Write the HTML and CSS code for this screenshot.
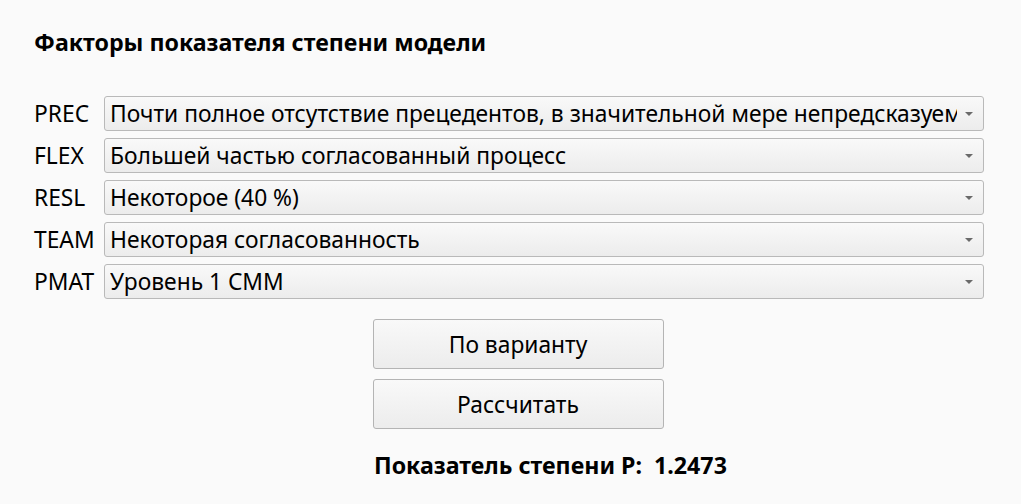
FILE: index.html
```html
<!DOCTYPE html>
<html lang="ru">
<head>
<meta charset="utf-8">
<link rel="stylesheet" href="styles.css">
</head>
<body>
<div class="page">
  <h1 class="title">Факторы показателя степени модели</h1>
  <div class="factors">
    <span class="label">PREC</span>
    <div class="combo"><span class="combo-text">Почти полное отсутствие прецедентов, в значительной мере непредсказуемый процесс</span><span class="arrow"></span></div>
    <span class="label">FLEX</span>
    <div class="combo"><span class="combo-text">Большей частью согласованный процесс</span><span class="arrow"></span></div>
    <span class="label">RESL</span>
    <div class="combo"><span class="combo-text">Некоторое (40 %)</span><span class="arrow"></span></div>
    <span class="label">TEAM</span>
    <div class="combo"><span class="combo-text">Некоторая согласованность</span><span class="arrow"></span></div>
    <span class="label">PMAT</span>
    <div class="combo"><span class="combo-text">Уровень 1 CMM</span><span class="arrow"></span></div>
  </div>
  <div class="actions">
    <button class="btn">По варианту</button>
    <button class="btn">Рассчитать</button>
    <div class="result">Показатель степени P:&nbsp; 1.2473</div>
  </div>
</div>
</body>
</html>
```
FILE: styles.css
```css
html, body {
  margin: 0;
  padding: 0;
  background: #fafafa;
}
body {
  font-family: "Noto Sans", "DejaVu Sans", sans-serif;
  color: #000;
  width: 1021px;
  height: 504px;
  overflow: hidden;
}
.page {
  padding: 26px 0 0 34px;
}
.title {
  margin: 0;
  font-size: 23.2px;
  font-weight: 700;
  line-height: 32px;
}
.factors {
  margin-top: 38px;
  display: grid;
  grid-template-columns: 70px 880px;
  grid-auto-rows: 35px;
  row-gap: 7px;
  align-items: center;
}
.label {
  font-size: 22.8px;
  line-height: 35px;
}
.combo {
  box-sizing: border-box;
  height: 35px;
  border: 1px solid #b9b9b9;
  border-radius: 3px;
  background: linear-gradient(#f9f9f9, #ececec);
  display: flex;
  align-items: center;
  padding: 0 10px 0 5px;
  gap: 8px;
}
.combo-text {
  flex: 1;
  font-size: 22.8px;
  line-height: 33px;
  white-space: nowrap;
  overflow: hidden;
}
.arrow {
  width: 0;
  height: 0;
  border-left: 4px solid transparent;
  border-right: 4px solid transparent;
  border-top: 4px solid #6a6a6a;
}
.actions {
  width: 968px;
  display: flex;
  flex-direction: column;
  align-items: center;
  margin-top: 20px;
}
.btn {
  box-sizing: border-box;
  width: 291px;
  height: 50px;
  border: 1px solid #b4b4b4;
  border-radius: 3px;
  background: linear-gradient(#f9f9f9, #ececec);
  font-family: inherit;
  font-size: 22.8px;
  color: #000;
  padding: 0;
  margin: 0 0 10px 0;
}
.result {
  align-self: flex-start;
  margin-left: 340px;
  margin-top: 10px;
  font-size: 23.2px;
  font-weight: 700;
  line-height: 32px;
}
```
